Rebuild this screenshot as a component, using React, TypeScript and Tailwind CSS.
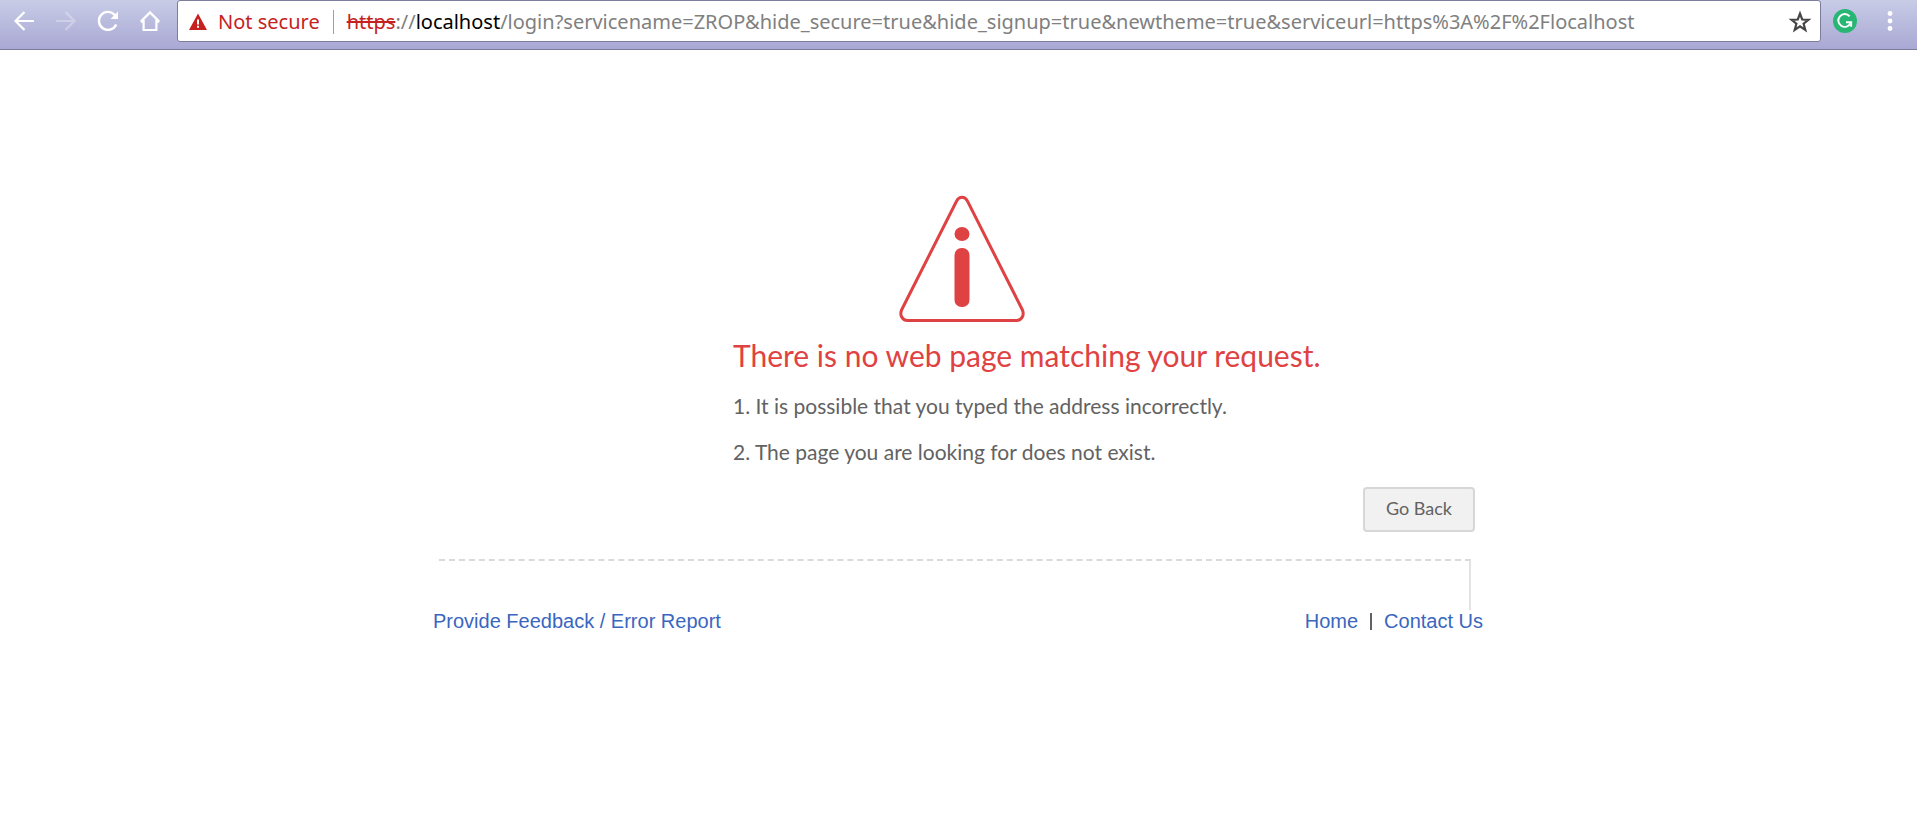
import React from 'react';

const iconButton = 'flex h-6 w-6 items-center justify-center text-white';

function BackIcon() {
  return (
    <svg className="h-6 w-6" viewBox="0 0 24 24" fill="none" stroke="currentColor" strokeWidth="2.2">
      <path d="M22 12H4M12.5 3 3.5 12l9 9" />
    </svg>
  );
}

function ForwardIcon() {
  return (
    <svg className="h-6 w-6" viewBox="0 0 24 24" fill="none" stroke="currentColor" strokeWidth="2.2">
      <path d="M2 12h18M11.5 3l9 9-9 9" />
    </svg>
  );
}

function ReloadIcon() {
  return (
    <svg className="h-6 w-6" viewBox="0 0 24 24" fill="none" stroke="currentColor" strokeWidth="2.4">
      <path d="M20.2 15.5A9 9 0 1 1 18.4 5.6l1.6 1.6" />
      <path d="M22 2.5V10h-7.5z" fill="currentColor" stroke="none" />
    </svg>
  );
}

function HomeIcon() {
  return (
    <svg className="h-6 w-6" viewBox="0 0 24 24" fill="none" stroke="currentColor" strokeWidth="2.2">
      <path d="M5.6 11v10h12.8V11" />
      <path d="M2.8 12.6H5.6M18.4 12.6h2.8M2.8 12.6 12 3.4l9.2 9.2" />
    </svg>
  );
}

function InsecureIcon() {
  return (
    <svg className="h-5 w-5" viewBox="0 0 20 20">
      <path d="M10 1.5 19 18H1z" fill="#c5221f" />
      <path d="M9 7.5h2v5H9zM9 13.8h2v2H9z" fill="#fff" />
    </svg>
  );
}

function StarIcon() {
  return (
    <svg className="h-6 w-6" viewBox="0 0 24 24" fill="none" stroke="#454545" strokeWidth="2.2">
      <path d="m12 3.6 2.2 5.9 6.3.3-4.9 3.9 1.7 6.2-5.3-3.6-5.3 3.6 1.7-6.2-4.9-3.9 6.3-.3z" />
    </svg>
  );
}

function GrammarIcon() {
  return (
    <svg className="h-6 w-6" viewBox="0 0 24 24" fill="none">
      <circle cx="12" cy="12" r="12" fill="#27b674" />
      <path d="M16.6 7.3A6.4 6.4 0 1 0 17.6 14" stroke="#fff" strokeWidth="1.9" />
      <path d="M13 13.2h5.2v4.6" stroke="#fff" strokeWidth="1.9" />
    </svg>
  );
}

function MenuIcon() {
  return (
    <svg className="h-6 w-6" viewBox="0 0 24 24" fill="currentColor">
      <circle cx="12" cy="4.5" r="2.4" />
      <circle cx="12" cy="12" r="2.4" />
      <circle cx="12" cy="19.5" r="2.4" />
    </svg>
  );
}

function WarningIcon() {
  return (
    <svg className="h-32 w-32" viewBox="0 0 128 128" fill="none">
      <path
        d="M58.5 6.2 3.8 114.5C1.2 120 4.2 125.5 9.5 125.5h109c5.3 0 8.3-5.5 5.7-11L69.5 6.2C67 .9 61 .9 58.5 6.2z"
        stroke="#df4242"
        strokeWidth="3"
      />
      <ellipse cx="64" cy="39" rx="7.5" ry="7" fill="#df4242" />
      <rect x="56.5" y="53" width="15" height="59" rx="7" fill="#df4242" />
    </svg>
  );
}

function BrowserBar() {
  const [path, setPath] = React.useState(
    '/login?servicename=ZROP&hide_secure=true&hide_signup=true&newtheme=true&serviceurl=https%3A%2F%2Flocalhost'
  );

  return (
    <header className="flex h-[50px] items-start border-b border-[#7c7c9c] bg-gradient-to-b from-[#c8cce6] to-[#a9a8d4] font-['Noto_Sans',sans-serif] text-xl">
      <nav className="flex h-[42px] items-center gap-[18px] pr-[15px] pl-3">
        <button className={iconButton} aria-label="Back"><BackIcon /></button>
        <button className={`${iconButton} opacity-30`} aria-label="Forward" disabled><ForwardIcon /></button>
        <button className={iconButton} aria-label="Reload"><ReloadIcon /></button>
        <button className={iconButton} aria-label="Home"><HomeIcon /></button>
      </nav>
      <div className="flex h-[42px] flex-1 items-center rounded-[3px] border border-[#7c7c9c] bg-white pt-px pr-2 pl-[10px]">
        <button className="flex items-center gap-[10px] whitespace-nowrap text-[#c5221f]">
          <InsecureIcon />
          Not secure
        </button>
        <span className="mx-[13px] h-6 w-px bg-[#a0a0a0]" />
        <label className="flex flex-1 items-center whitespace-nowrap text-[#808080]">
          <span className="text-[#c5221f] line-through">https</span>
          <span>://</span>
          <span className="text-black">localhost</span>
          <input
            className="min-w-0 flex-1 outline-none"
            aria-label="Address"
            value={path}
            onChange={(e) => setPath(e.target.value)}
          />
        </label>
        <button aria-label="Bookmark"><StarIcon /></button>
      </div>
      <div className="flex h-[42px] items-center gap-[21px] pr-[15px] pl-3">
        <button className={iconButton} aria-label="Grammar"><GrammarIcon /></button>
        <button className={iconButton} aria-label="Menu"><MenuIcon /></button>
      </div>
    </header>
  );
}

function ErrorPage() {
  return (
    <main className="mx-auto max-w-[1051px] pt-[145px]">
      <div className="flex justify-center pl-[7px]">
        <WarningIcon />
      </div>
      <div className="pl-[300px] font-['Lato',sans-serif] text-[#626262]">
        <h1 className="mt-3 text-3xl leading-10 font-normal text-[#df4242]">
          There is no web page matching your request.
        </h1>
        <ol className="mt-2 text-[21px] leading-[46px]">
          <li>1. It is possible that you typed the address incorrectly.</li>
          <li>2. The page you are looking for does not exist.</li>
        </ol>
      </div>
      <div className="mt-3 flex justify-end pr-[9px]">
        <button className="h-[45px] w-28 rounded-[4px] border-2 border-[#d7d7d7] bg-[#f1f1f1] pb-1 font-['Lato',sans-serif] text-lg text-[#626262]">
          Go Back
        </button>
      </div>
      <div className="mt-[27px] mr-[13px] ml-[6px] h-[51px] border-t-2 border-r-2 border-[#dadada] border-r-[#e2e2e2] [border-top-style:dashed]" />
      <footer className="flex items-center justify-between font-['Liberation_Sans',Arial,sans-serif] text-xl leading-[22px] text-[#3a66c0]">
        <a href="#feedback">Provide Feedback / Error Report</a>
        <div className="flex items-center gap-3 pr-px">
          <a href="#home">Home</a>
          <span className="h-[17px] w-0.5 bg-[#626262]" />
          <a href="#contact">Contact Us</a>
        </div>
      </footer>
    </main>
  );
}

function App() {
  return (
    <div className="min-h-screen bg-white">
      <BrowserBar />
      <ErrorPage />
    </div>
  );
}

export default App;
